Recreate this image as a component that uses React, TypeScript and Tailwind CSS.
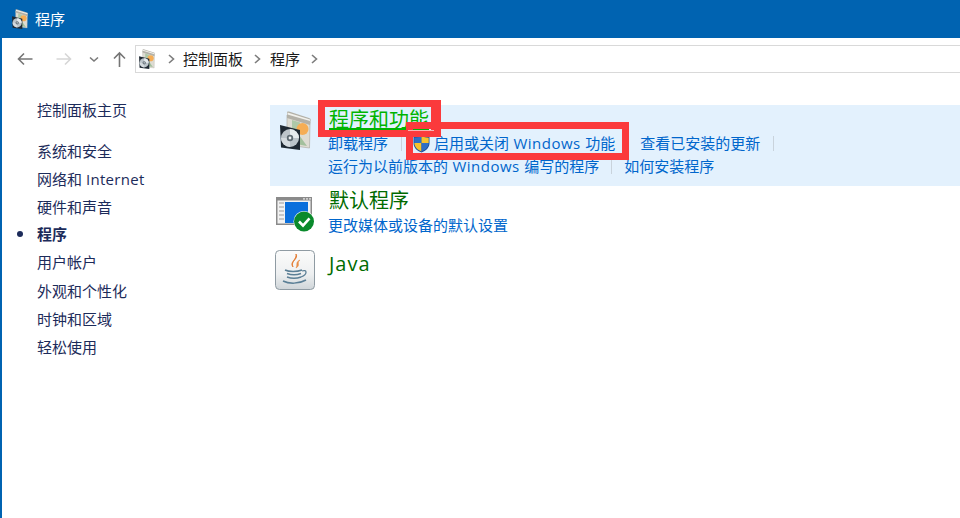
import React from "react";

function ProgramsIcon({ w, h }: { w: number; h: number }) {
  return (
    <svg width={w} height={h} viewBox="0 0 31 39" className="shrink-0">
      <path d="M7 4 L30 11 L29.500 37 L7 34 Z" fill="#dedcd3" stroke="#a8a69d" strokeWidth="0.600" />
      <path d="M7 1.500 C7 0.500 8 0.300 9 0.600 L29 7 C30.500 7.500 30.700 8 30.700 9 L30 14 L7 7 Z" fill="#b3b1a8" />
      <path d="M7.500 1.500 L30 8.500 L30 10 L7.500 3.500 Z" fill="#f2f1ec" />
      <path d="M12 9 L20 11.500 L20 24 L12 22 Z" fill="#aec8a8" />
      <circle cx="22.500" cy="18" r="6" fill="#f5ad55" />
      <path d="M19 24 L27 35 L16 33 Z" fill="#a3c09d" />
      <path d="M0 14 L20 19 L20 39 L1 36.500 Z" fill="#1f2933" />
      <circle cx="10" cy="27" r="9" fill="#bcc4ca" />
      <path d="M10 18 A9 9 0 0 1 19 27 L10 27 Z" fill="#e6ebee" />
      <path d="M10 36 A9 9 0 0 1 1 27 L10 27 Z" fill="#d5dbdf" />
      <circle cx="10" cy="27" r="3.200" fill="#5f6b73" />
      <circle cx="10" cy="27" r="1.400" fill="#eef1f3" />
    </svg>
  );
}

function DefaultIcon() {
  return (
    <svg width="40" height="36" viewBox="0 0 40 36" className="shrink-0">
      <rect x="1" y="1" width="36" height="28" fill="#8a8a8a" />
      <rect x="2.500" y="4.500" width="33" height="23" fill="#f2f2f2" />
      <rect x="28" y="2.200" width="2" height="1.400" fill="#ddd" />
      <rect x="31" y="2.200" width="2" height="1.400" fill="#ddd" />
      <rect x="34" y="2.200" width="2" height="1.400" fill="#ddd" />
      <path d="M4 7h5M4 11h5M4 15h5M4 19h5M4 23h5" stroke="#9a9a9a" strokeWidth="1.200" />
      <rect x="10" y="6" width="23" height="21" fill="#0a6fdc" />
      <circle cx="29" cy="25.500" r="10.500" fill="#fff" />
      <circle cx="29" cy="25.500" r="10" fill="#0a8a2c" />
      <path d="M24 25.500 L28 29.500 L34.500 22.300" fill="none" stroke="#fff" strokeWidth="2.600" />
    </svg>
  );
}

function JavaIcon() {
  return (
    <svg width="40" height="40" viewBox="0 0 40 40" className="shrink-0">
      <defs>
        <linearGradient id="jv" x1="0" y1="0" x2="0" y2="1">
          <stop offset="0" stopColor="#fbfbfb" />
          <stop offset="0.6" stopColor="#eef0f1" />
          <stop offset="1" stopColor="#cfd5d9" />
        </linearGradient>
      </defs>
      <rect x="0.500" y="0.500" width="39" height="39" rx="4" fill="url(#jv)" stroke="#8f9ba3" />
      <path d="M21 4 C24 9 15 11 18 17 C14 12 22 10 21 4 Z" fill="#e2762b" stroke="#e2762b" strokeWidth="0.800" />
      <path d="M25 10 C20 12 23 15 21 18 C26 15 21 13 25 10 Z" fill="#e98c45" stroke="#e98c45" strokeWidth="0.600" />
      <path d="M10 20 C14 22 22 22 27 20 M12 23.500 C16 25 22 25 26 23.500 M12 27 C16 28.500 22 28.500 26 27 M8 31 C14 34 24 34 31 30" fill="none" stroke="#5b7f96" strokeWidth="1.500" />
      <path d="M27 21 C32 19 33 24 26 27" fill="none" stroke="#5b7f96" strokeWidth="1.300" />
    </svg>
  );
}

function Shield() {
  return (
    <svg width="17" height="19" viewBox="0 0 17 19" className="shrink-0">
      <path d="M8.500 0.500 C6 2.300 3 3 0.500 3 V9 C0.500 13.500 4 17 8.500 18.500 C13 17 16.500 13.500 16.500 9 V3 C14 3 11 2.300 8.500 0.500 Z" fill="#1c4f9c" />
      <path d="M8.500 1.500 V9 H1.300 V3.800 C4 3.700 6.500 3 8.500 1.500 Z" fill="#2f6fc4" />
      <path d="M8.500 1.500 C10.500 3 13 3.700 15.700 3.800 V9 H8.500 Z" fill="#f8c22c" />
      <path d="M1.300 9 H8.500 V17.500 C4.500 16 1.500 13 1.300 9 Z" fill="#f8c22c" />
      <path d="M8.500 9 H15.700 C15.500 13 12.500 16 8.500 17.500 Z" fill="#2f6fc4" />
    </svg>
  );
}

function Chevron({ className }: { className: string }) {
  return (
    <svg width="7" height="10" viewBox="0 0 7 10" className={className}>
      <path d="M1 1 L5.500 5 L1 9" fill="none" stroke="#7d7d7d" strokeWidth="1.600" />
    </svg>
  );
}

function Sep({ className }: { className: string }) {
  return <span className={"block w-px h-[15px] bg-[#c9d3dc] shrink-0 " + className} />;
}

const link = "text-[15px] leading-[23px] text-[#0066cc] whitespace-nowrap";
const title = "text-[20px] leading-[26px] text-[#006b00] whitespace-nowrap ml-[1px]";
const latin = "tracking-[0.5px]";

export default function App() {
  return (
    <div
      className="relative w-[960px] h-[518px] overflow-hidden bg-white flex flex-col border-l-2 border-[#0063b1]"
      style={{ fontFamily: '"Open Sans","Noto Sans CJK SC",sans-serif' }}
    >
      <header className="h-[38px] bg-[#0063b1] flex items-center pl-[12px] shrink-0 -ml-[2px]">
        <ProgramsIcon w={16} h={20} />
        <span className="text-[15px] text-white ml-[7px]">程序</span>
      </header>

      <div className="h-[42px] flex items-center pl-[15px] shrink-0">
        <svg width="16" height="14" viewBox="0 0 16 14" className="shrink-0">
          <path d="M15.500 7 H1.500 M7 1.500 L1.500 7 L7 12.500" fill="none" stroke="#757575" strokeWidth="1.600" />
        </svg>
        <svg width="16" height="14" viewBox="0 0 16 14" className="ml-[23px] shrink-0">
          <path d="M0.500 7 H14.500 M9 1.500 L14.500 7 L9 12.500" fill="none" stroke="#d6d6d6" strokeWidth="1.600" />
        </svg>
        <svg width="10" height="7" viewBox="0 0 10 7" className="ml-[17px] shrink-0">
          <path d="M1 1.500 L5 5 L9 1.500" fill="none" stroke="#7a7a7a" strokeWidth="1.600" />
        </svg>
        <svg width="13" height="17" viewBox="0 0 13 17" className="ml-[14px] shrink-0">
          <path d="M6.500 16 V2 M1 7.500 L6.500 2 L12 7.500" fill="none" stroke="#757575" strokeWidth="1.600" />
        </svg>
        <div className="ml-[9px] flex-1 h-[28px] border border-[#d9d9d9] border-r-0 flex items-center pl-[3px] text-[15px] text-[#1a1a1a]">
          <ProgramsIcon w={16} h={20} />
          <Chevron className="ml-[13px] shrink-0" />
          <span className="ml-[8px]">控制面板</span>
          <Chevron className="ml-[11px] shrink-0" />
          <span className="ml-[9px]">程序</span>
          <Chevron className="ml-[11px] shrink-0" />
        </div>
      </div>

      <div className="flex flex-1 min-h-0">
        <aside className="w-[268px] shrink-0 pt-[16px] pl-[35px] text-[15px] text-[#1c2b5a]">
          <div className="h-[28px] leading-[28px]">控制面板主页</div>
          <div className="mt-[13px] whitespace-nowrap">
            <div className="h-[28px] leading-[28px]">系统和安全</div>
            <div className="h-[28px] leading-[28px]">
              网络和 <span className="tracking-[0.3px]">Internet</span>
            </div>
            <div className="h-[27px] leading-[28px]">硬件和声音</div>
            <div className="relative h-[28px] leading-[28px] font-bold">
              <span className="absolute left-[-20px] top-[11px] w-[6px] h-[6px] rounded-full bg-[#1c2b5a]" />
              程序
            </div>
            <div className="h-[29px] leading-[28px]">用户帐户</div>
            <div className="h-[28px] leading-[28px]">外观和个性化</div>
            <div className="h-[28px] leading-[28px]">时钟和区域</div>
            <div className="h-[28px] leading-[28px]">轻松使用</div>
          </div>
        </aside>

        <main className="flex-1 pt-[25px]">
          <section className="h-[81px] bg-[#e3f1fd] flex pl-[10px]">
            <div className="w-[48px] pt-[6px] shrink-0">
              <ProgramsIcon w={31} h={39} />
            </div>
            <div className="pt-[2px]">
              <div className="text-[20px] leading-[26px] text-[#00b400] underline whitespace-nowrap ml-[1px]">程序和功能</div>
              <div className="flex items-center h-[23px] -mt-[1px]">
                <span className={link}>卸载程序</span>
                <Sep className="ml-[13px]" />
                <span className="ml-[11px] flex"><Shield /></span>
                <span className={link + " ml-[4px]"}>
                  启用或关闭<span className={latin}> Windows </span>功能
                </span>
                <Sep className="ml-[12px]" />
                <span className={link + " ml-[12px]"}>查看已安装的更新</span>
                <Sep className="ml-[13px]" />
              </div>
              <div className="flex items-center h-[23px]">
                <span className={link}>
                  运行为以前版本的<span className={latin}> Windows </span>编写的程序
                </span>
                <Sep className="ml-[12px]" />
                <span className={link + " ml-[12px]"}>如何安装程序</span>
              </div>
            </div>
          </section>

          <section className="flex pl-[5px] h-[57px]">
            <div className="w-[53px] pt-[10px] shrink-0">
              <DefaultIcon />
            </div>
            <div className="pt-[2px]">
              <div className={title}>默认程序</div>
              <div className={link}>更改媒体或设备的默认设置</div>
            </div>
          </section>

          <section className="flex pl-[5px]">
            <div className="w-[53px] pt-[7px] shrink-0">
              <JavaIcon />
            </div>
            <div className="pt-[8px]">
              <div className={title + " tracking-[1px]"}>Java</div>
            </div>
          </section>
        </main>
      </div>

      <div className="absolute left-[316px] top-[100px] w-[123px] h-[37px] border-[7px] border-r-[10px] border-[#fb3a3c]" />
      <div className="absolute left-[404px] top-[122px] w-[223px] h-[38px] border-[7px] border-[#fb3a3c]" />
      <div className="absolute left-[406px] top-[130px] w-[26px] h-px bg-[#f5b5b5]" />
    </div>
  );
}
